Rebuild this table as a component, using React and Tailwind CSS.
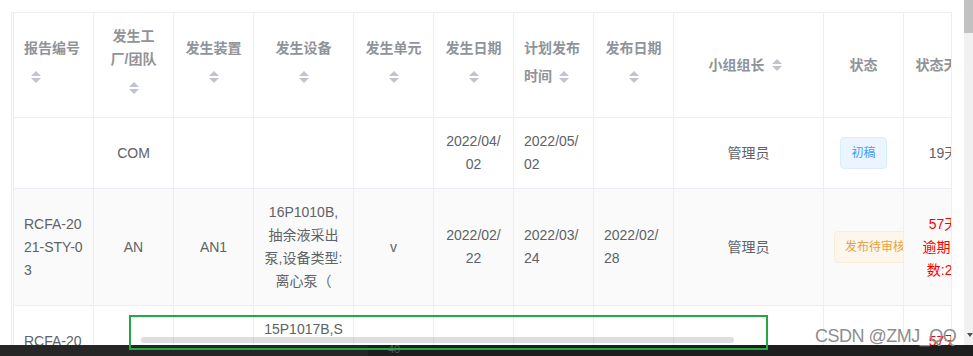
import React from "react";

const COLS = "grid-cols-[80px_80px_80px_100px_80px_80px_80px_80px_150px_80px_80px]";

function Caret() {
  return (
    <span className="relative inline-block w-[24px] h-[34px] shrink-0">
      <svg className="absolute left-[7px] top-[11px]" width="10" height="12" viewBox="0 0 10 12">
        <path d="M5 0 L10 5 L0 5 Z" fill="#c0c4cc" />
        <path d="M0 7 L10 7 L5 12 Z" fill="#c0c4cc" />
      </svg>
    </span>
  );
}

function Th({ children, align = "center" }) {
  return (
    <div className="h-[105px] border-r border-b border-[#ebeef5] bg-white flex items-center px-[10px] overflow-hidden">
      <div
        className={
          "w-full font-bold text-[#909399] text-[14px] leading-[23px] whitespace-nowrap " +
          (align === "left" ? "text-left" : "text-center")
        }
      >
        {children}
      </div>
    </div>
  );
}

function CaretLine({ align = "center", children }) {
  return (
    <div className={"h-[34px] flex items-center " + (align === "left" ? "justify-start" : "justify-center")}>
      {children}
      <Caret />
    </div>
  );
}

function Tag({ type, children }) {
  const cls =
    type === "blue"
      ? "bg-[#ecf5ff] border-[#d9ecff] text-[#409eff]"
      : "bg-[#fdf6ec] border-[#faecd8] text-[#e6a23c]";
  return (
    <span
      className={
        "inline-block h-[32px] leading-[30px] px-[10px] text-[12px] border rounded-[4px] whitespace-nowrap " + cls
      }
    >
      {children}
    </span>
  );
}

function Td({ lines, align = "center", h, bg, red, tag }) {
  const alignCls = align === "left" ? "text-left" : "text-center";
  return (
    <div
      className={
        "border-r border-b border-[#ebeef5] flex items-center px-[10px] overflow-hidden " + h + " " + bg
      }
    >
      <div
        className={
          "w-full text-[14px] leading-[23px] whitespace-nowrap " +
          alignCls +
          " " +
          (red ? "text-[#ff0000]" : "text-[#606266]")
        }
      >
        {tag
          ? tag
          : (Array.isArray(lines) ? lines : [lines]).map((l, i) => <div key={i}>{l || "\u00a0"}</div>)}
      </div>
    </div>
  );
}

const ALIGN = ["left", "center", "center", "center", "center", "center", "left", "left", "center", "center", "center"];

function Row({ cells, h, bg }) {
  return (
    <>
      {cells.map((c, i) => {
        if (c && c.tag) {
          return (
            <Td
              key={i}
              h={h}
              bg={bg}
              align={c.tagAlign || "center"}
              tag={<Tag type={c.tag}>{c.text}</Tag>}
            />
          );
        }
        if (c && c.red) {
          return <Td key={i} h={h} bg={bg} align={ALIGN[i]} lines={c.red} red />;
        }
        return <Td key={i} h={h} bg={bg} align={ALIGN[i]} lines={c} />;
      })}
    </>
  );
}

export default function App() {
  const row1 = [
    "",
    "COM",
    "",
    "",
    "",
    ["2022/04/", "02"],
    ["2022/05/", "02"],
    "",
    "管理员",
    { tag: "blue", text: "初稿" },
    "19天",
  ];
  const row2 = [
    ["RCFA-20", "21-STY-0", "3"],
    "AN",
    "AN1",
    ["16P1010B,", "抽余液采出", "泵,设备类型:", "离心泵（"],
    "v",
    ["2022/02/", "22"],
    ["2022/03/", "24"],
    ["2022/02/", "28"],
    "管理员",
    { tag: "orange", text: "发布待审核", tagAlign: "left" },
    { red: ["57天", "逾期天", "数:21"] },
  ];
  const row3 = [
    ["RCFA-20", "21-STY-0", "2"],
    "AN",
    "AN1",
    ["15P1017B,S", "TY-01,设备", "类型:离心", "泵"],
    "v",
    ["2022/02/", "22"],
    ["2022/03/", "24"],
    ["2022/02/", "28"],
    "管理员",
    { tag: "orange", text: "发布待审核", tagAlign: "left" },
    { red: ["57天", "逾期天", "数:20"] },
  ];

  return (
    <div className="relative w-[973px] h-[356px] overflow-hidden bg-white flex flex-col font-['Liberation_Sans','Noto_Sans_CJK_SC',sans-serif]">
      <div className="h-[345px] flex overflow-hidden">
        {/* table area */}
        <div className="w-[964px] pt-[12px] pl-[11px] overflow-hidden">
          <div className="w-[941px] h-full border-l border-t border-[#ebeef5] pl-[1px]">
            <div className="w-[939px] h-full border-l border-r border-[#ebeef5] overflow-hidden">
              <div className={"grid w-[970px] " + COLS}>
                <Th align="left">
                  <div>报告编号</div>
                  <CaretLine align="left" />
                </Th>
                <Th>
                  <div>发生工</div>
                  <div>厂/团队</div>
                  <CaretLine />
                </Th>
                <Th>
                  <div>发生装置</div>
                  <CaretLine />
                </Th>
                <Th>
                  <div>发生设备</div>
                  <CaretLine />
                </Th>
                <Th>
                  <div>发生单元</div>
                  <CaretLine />
                </Th>
                <Th>
                  <div>发生日期</div>
                  <CaretLine />
                </Th>
                <Th align="left">
                  <div>计划发布</div>
                  <CaretLine align="left">时间</CaretLine>
                </Th>
                <Th>
                  <div>发布日期</div>
                  <CaretLine />
                </Th>
                <Th>
                  <CaretLine>小组组长</CaretLine>
                </Th>
                <Th>
                  <div>状态</div>
                </Th>
                <Th>
                  <div>状态天数</div>
                </Th>

                <Row cells={row1} h="h-[71px]" bg="bg-white" />
                <Row cells={row2} h="h-[117px]" bg="bg-[#fafafa]" />
                <Row cells={row3} h="h-[117px]" bg="bg-white" />
              </div>
            </div>
          </div>
        </div>
        {/* vertical scrollbar */}
        <div className="w-[9px] h-full bg-[#f1f1f1] flex flex-col justify-between">
          <div className="h-[33px] bg-[#c1c1c1]" />
          <div className="mb-[8px] flex justify-end pr-[0px]">
            <svg width="6" height="4" viewBox="0 0 6 4">
              <path d="M0 0 L6 0 L3 4 Z" fill="#505050" />
            </svg>
          </div>
        </div>
      </div>

      {/* bottom dark bar */}
      <div className="h-[11px] flex">
        <div className="w-[368px] h-full bg-[#262626]" />
        <div className="flex-1 h-full bg-[#1e1e1e] pl-[20px]">
          <span className="block text-[11px] leading-[8px] text-[#5a5a5a]">40</span>
        </div>
      </div>

      {/* horizontal scrollbar thumb overlay */}
      <div className="absolute left-[141px] top-[337px] w-[593px] h-[6px] rounded-[3px] bg-[#909399]/30" />

      {/* green highlight box overlay */}
      <div className="absolute left-[129px] top-[315px] w-[639px] h-[35px] border-2 border-[#22a845]" />

      {/* watermark */}
      <div className="absolute left-[815px] top-[325px] text-[18px] leading-[22px] tracking-[-0.5px] text-[#8e8e8e] whitespace-nowrap">
        CSDN @ZMJ_QQ
      </div>
    </div>
  );
}
